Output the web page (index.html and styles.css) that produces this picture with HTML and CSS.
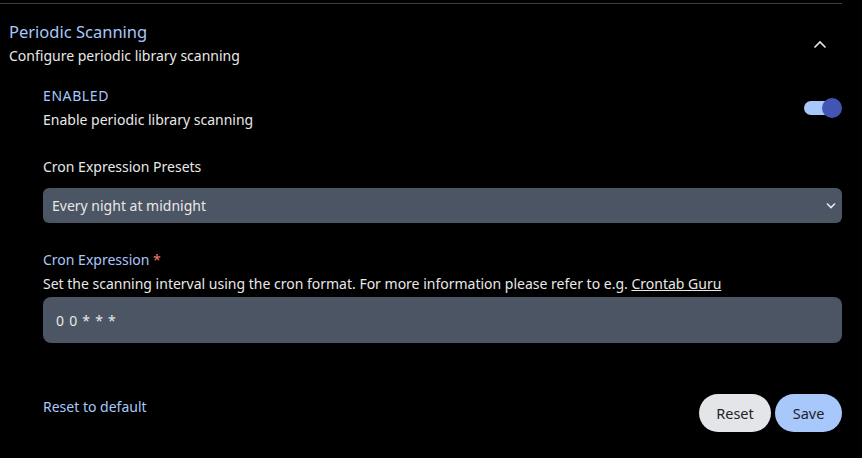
FILE: index.html
```html
<!DOCTYPE html>
<html>
<head>
<meta charset="utf-8">
<link rel="stylesheet" href="styles.css">
</head>
<body>
<div class="panel">
  <div class="header">
    <div class="head-text">
      <div class="title">Periodic Scanning</div>
      <div class="subtitle">Configure periodic library scanning</div>
    </div>
    <svg class="chev-up" width="14" height="9" viewBox="0 0 14 9"><path d="M1.5 7.5 L7 2 L12.5 7.5" fill="none" stroke="#e8e8e8" stroke-width="1.6"/></svg>
  </div>
  <div class="body">
    <div class="row-toggle">
      <div>
        <div class="label blue caps">ENABLED</div>
        <div class="desc">Enable periodic library scanning</div>
      </div>
      <div class="toggle"><div class="track"></div><div class="knob"></div></div>
    </div>
    <div class="field">
      <div class="label">Cron Expression Presets</div>
      <div class="select">
        <span>Every night at midnight</span>
        <svg width="10" height="7" viewBox="0 0 10 7"><path d="M1 1.5 L5 5.5 L9 1.5" fill="none" stroke="#e8e8e8" stroke-width="1.6"/></svg>
      </div>
    </div>
    <div class="field2">
      <div class="label blue">Cron Expression <span class="req">*</span></div>
      <div class="desc">Set the scanning interval using the cron format. For more information please refer to e.g. <a href="#" class="link">Crontab Guru</a></div>
      <div class="input">0 0 * * *</div>
    </div>
    <div class="footer">
      <a href="#" class="reset-default">Reset to default</a>
      <div class="buttons">
        <button class="btn btn-reset">Reset</button>
        <button class="btn btn-save">Save</button>
      </div>
    </div>
  </div>
</div>
</body>
</html>
```
FILE: styles.css
```css
html, body { margin: 0; padding: 0; background: #000; }
body { font-family: "Noto Sans", "Open Sans", sans-serif; color: #e6e6e6; width: 862px; height: 458px; overflow: hidden; }
.panel { width: 842px; border-top: 1px solid #3b3f47; margin-top: 3px; }
.header { display: flex; justify-content: space-between; align-items: center; padding: 16px 15px 0 9px; }
.title { font-size: 16.5px; color: #a8c7fa; line-height: 24px; }
.subtitle { font-size: 14px; line-height: 24px; color: #e8e8e8; }
.body { padding: 0 0 0 43px; margin-top: 16px; }
.row-toggle { display: flex; justify-content: space-between; align-items: center; }
.label { font-size: 14px; line-height: 24px; color: #e8e8e8; }
.caps { letter-spacing: 0.6px; }
.blue { color: #a8c7fa; }
.desc { font-size: 14px; line-height: 24px; color: #e8e8e8; }
.toggle { position: relative; width: 38px; height: 20px; }
.track { position: absolute; left: 0; top: 3px; width: 34px; height: 14px; border-radius: 7px; background: #a8c7fa; }
.knob { position: absolute; right: 0; top: 0; width: 20px; height: 20px; border-radius: 50%; background: #4355b4; }
.field { margin-top: 23px; }
.select { margin-top: 9px; height: 35px; background: #4b5563; border-radius: 6px; display: flex; justify-content: space-between; align-items: center; padding: 0 6px 0 9px; font-size: 14px; color: #e8e8e8; }
.field2 { margin-top: 25px; }
.req { color: #f47b73; }
.link { color: #e8e8e8; text-decoration: underline; }
.input { margin-top: 1px; height: 46px; background: #4b5563; border-radius: 8px; display: flex; align-items: center; padding: 0 13px; font-size: 14px; color: #e8e8e8; word-spacing: 1.5px; }
.footer { display: flex; justify-content: space-between; align-items: flex-end; margin-top: 51px; }
.reset-default { color: #a8c7fa; text-decoration: none; font-size: 14px; line-height: 24px; margin-bottom: 13px; }
.buttons { display: flex; gap: 4px; }
.btn { border: none; height: 38px; border-radius: 19px; font-family: inherit; font-size: 14.5px; color: #1f2328; padding: 0 16px; }
.btn-reset { background: #e4e5e8; width: 72px; }
.btn-save { background: #a8c7fa; width: 67px; }
```
